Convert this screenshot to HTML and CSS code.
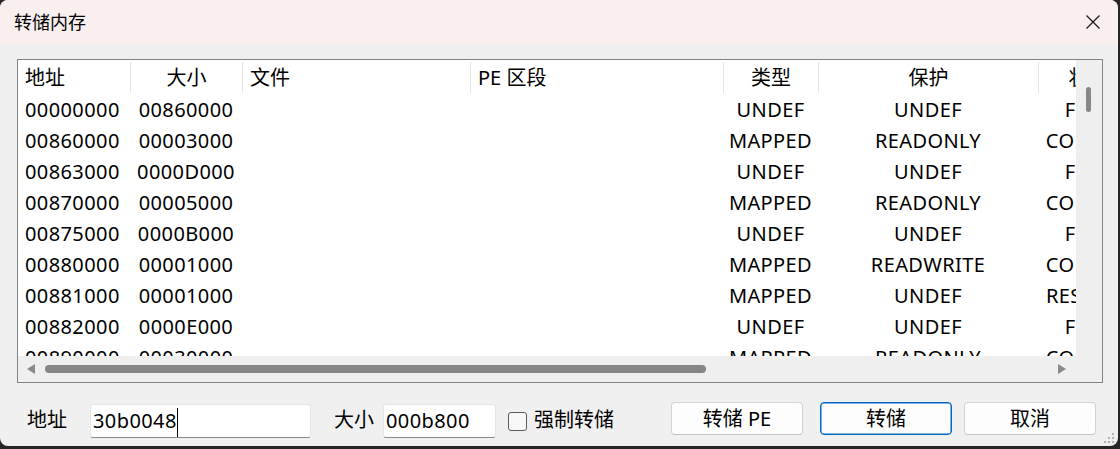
FILE: index.html
```html
<!DOCTYPE html>
<html lang="zh-CN">
<head>
    <meta charset="UTF-8">
    <title>转储内存</title>
    <link rel="stylesheet" href="styles.css">
</head>
<body>
    <div class="window">
        <div class="titlebar">
            <span class="title">转储内存</span>
            <svg class="close" width="14" height="14" viewBox="0 0 14 14">
                <path d="M0.5 0.5 L13.5 13.5 M13.5 0.5 L0.5 13.5" stroke="#1b1b1b" stroke-width="1.3" fill="none"/>
            </svg>
        </div>

        <div class="content">
            <div class="listview">
                <div class="viewport">
                    <div class="cols head">
                        <div class="hcell">地址</div>
                        <div class="hcell center">大小</div>
                        <div class="hcell">文件</div>
                        <div class="hcell">PE 区段</div>
                        <div class="hcell center">类型</div>
                        <div class="hcell center">保护</div>
                        <div class="hcell center">状态</div>
                    </div>
                    <div id="rows"></div>
                </div>
                <div class="vscroll"><div class="vthumb"></div></div>
                <div class="hscroll">
                    <span class="arrow-left"></span>
                    <div class="hthumb"></div>
                    <span class="arrow-right"></span>
                </div>
                <div class="corner"></div>
            </div>

            <div class="footer">
                <span class="label">地址</span>
                <div class="field addr">30b0048<span class="caret"></span></div>
                <span class="label size-label">大小</span>
                <div class="field size">000b800</div>
                <span class="checkbox"></span>
                <span class="check-label">强制转储</span>
                <div class="btn pe">转储 PE</div>
                <div class="btn primary">转储</div>
                <div class="btn cancel">取消</div>
            </div>
        </div>

        <svg class="grip" width="12" height="12" viewBox="0 0 12 12">
            <rect x="9" y="0" width="2" height="2"/>
            <rect x="5" y="4" width="2" height="2"/>
            <rect x="9" y="4" width="2" height="2"/>
            <rect x="1" y="8" width="2" height="2"/>
            <rect x="5" y="8" width="2" height="2"/>
            <rect x="9" y="8" width="2" height="2"/>
        </svg>
    </div>

    <script>
        // memory regions shown in the list
        const regions = [
            ["00000000", "00860000", "UNDEF", "UNDEF", "FREE"],
            ["00860000", "00003000", "MAPPED", "READONLY", "COMMIT"],
            ["00863000", "0000D000", "UNDEF", "UNDEF", "FREE"],
            ["00870000", "00005000", "MAPPED", "READONLY", "COMMIT"],
            ["00875000", "0000B000", "UNDEF", "UNDEF", "FREE"],
            ["00880000", "00001000", "MAPPED", "READWRITE", "COMMIT"],
            ["00881000", "00001000", "MAPPED", "UNDEF", "RESERVE"],
            ["00882000", "0000E000", "UNDEF", "UNDEF", "FREE"],
            ["00890000", "00030000", "MAPPED", "READONLY", "COMMIT"]
        ];

        const rows = document.getElementById('rows');
        regions.forEach(r => {
            const row = document.createElement('div');
            row.className = 'cols row';
            row.innerHTML =
                `<div class="cell">${r[0]}</div>` +
                `<div class="cell center">${r[1]}</div>` +
                `<div class="cell"></div>` +
                `<div class="cell"></div>` +
                `<div class="cell center">${r[2]}</div>` +
                `<div class="cell center">${r[3]}</div>` +
                `<div class="cell center">${r[4]}</div>`;
            rows.appendChild(row);
        });
    </script>
</body>
</html>
```

FILE: styles.css
```css
body {
    margin: 0;
    padding: 0;
    background: #262626;
    font-family: "Noto Sans", "Noto Sans CJK SC", sans-serif;
    color: #000;
}

.window {
    position: relative;
    width: 1118px;
    height: 446px;
    background: #f0f0f0;
    border-radius: 8px;
    overflow: hidden;
}

.titlebar {
    height: 44px;
    background: #f8efee;
    display: flex;
    align-items: center;
    padding: 0 18px 0 14px;
}

.title {
    font-size: 18px;
    line-height: 20px;
    flex: 1;
}

.close {
    display: block;
}

.content {
    padding: 15px 0 0 17px;
}

/* list view */
.listview {
    display: grid;
    grid-template-columns: 1058px 26px;
    grid-template-rows: 296px 26px;
    width: 1084px;
    border: 1px solid #838383;
}

.viewport {
    background: #fff;
    overflow: hidden;
}

.cols {
    display: grid;
    grid-template-columns: 112px 112px 228px 253px 95px 220px 100px;
    width: 1120px;
    font-size: 20px;
}

.head {
    margin: 2px 0 1px;
}

.hcell {
    height: 31px;
    line-height: 31px;
    padding-left: 7px;
    border-left: 1px solid #e5e5e5;
    white-space: nowrap;
}

.hcell:first-child {
    border-left: none;
}

.row .cell {
    height: 31px;
    line-height: 31px;
    padding-left: 7px;
    letter-spacing: 0.4px;
    white-space: nowrap;
}

.hcell.center,
.row .cell.center {
    padding-left: 0;
    text-align: center;
}

.vscroll {
    background: #efefef;
    padding: 27px 0 0 10px;
}

.vthumb {
    width: 5px;
    height: 25px;
    border-radius: 3px;
    background: #878787;
}

.hscroll {
    background: #efefef;
    display: flex;
    align-items: center;
    padding: 0 10px 0 9px;
}

.arrow-left,
.arrow-right {
    width: 0;
    height: 0;
    border-top: 5px solid transparent;
    border-bottom: 5px solid transparent;
}

.arrow-left {
    border-right: 8px solid #8a8a8a;
}

.arrow-right {
    border-left: 8px solid #8a8a8a;
    margin-left: auto;
}

.hthumb {
    margin-left: 10px;
    width: 661px;
    height: 8px;
    border-radius: 4px;
    background: #868686;
}

.corner {
    background: #efefef;
}

/* bottom bar */
.footer {
    display: flex;
    align-items: flex-start;
    padding: 19px 22px 0 10px;
    font-size: 20px;
}

.label {
    margin-top: 8px;
    line-height: 20px;
}

.size-label {
    margin-left: 23px;
}

.field {
    margin-top: 2px;
    height: 32px;
    line-height: 32px;
    background: #fff;
    border: 1px solid #e6e6e6;
    border-bottom-color: #8a8a8a;
    border-radius: 3px;
    padding-left: 2px;
    letter-spacing: 0.4px;
    white-space: nowrap;
}

.addr {
    margin-left: 23px;
    width: 217px;
}

.size {
    margin-left: 9px;
    width: 109px;
}

.caret {
    display: inline-block;
    width: 1px;
    height: 29px;
    background: #000;
    vertical-align: middle;
}

.checkbox {
    margin: 10px 0 0 12px;
    width: 17px;
    height: 17px;
    border: 1px solid #5b5b5b;
    border-radius: 3px;
    background: #f8f8f8;
}

.check-label {
    margin: 8px 0 0 7px;
    line-height: 20px;
}

.btn {
    width: 130px;
    height: 31px;
    line-height: 31px;
    text-align: center;
    background: #fdfdfd;
    border: 1px solid #d3d3d3;
    border-bottom-color: #c2c2c2;
    border-radius: 4px;
}

.btn.pe {
    margin-left: auto;
}

.btn.primary {
    margin-left: 17px;
    border: 1px solid #0067c0;
    box-shadow: inset 0 0 0 0.5px #0067c0;
}

.btn.cancel {
    margin-left: 12px;
}

.grip {
    position: absolute;
    right: 3px;
    bottom: 1px;
    fill: #b3b3b3;
}
```
